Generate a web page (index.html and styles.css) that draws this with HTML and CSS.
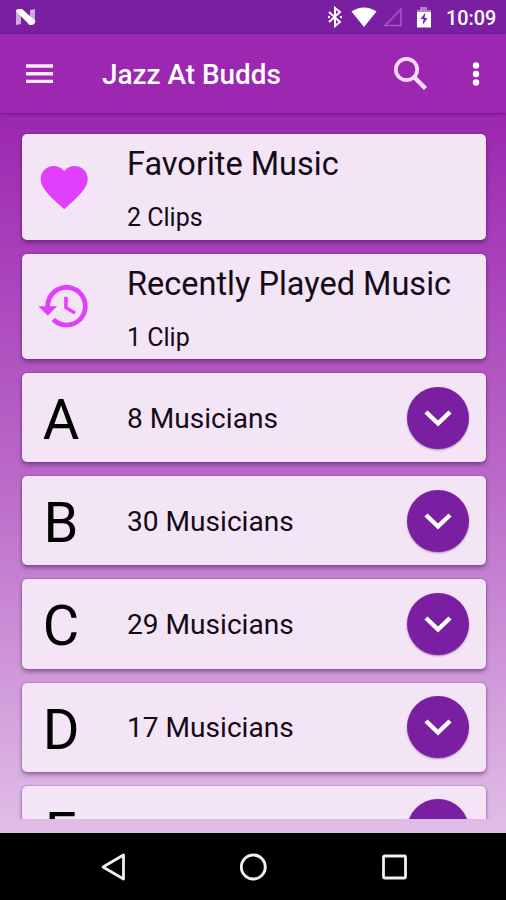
FILE: index.html
```html
<!DOCTYPE html>
<html lang="en">
<head>
<meta charset="utf-8">
<title>Jazz At Budds</title>
<link rel="stylesheet" href="styles.css">
</head>
<body>
<div class="screen">
  <div class="status">
    <svg class="n-logo" viewBox="0 0 22 18"><path d="M1 3l5-1v14l-5 1z" fill="#d3a8df"/><path d="M15 2l5-1v14l-5 1z" fill="#d3a8df"/><path d="M1 3q0-2 3-2h3l13.500 12q-1 4-4 4h-2z" fill="#fff"/></svg>
    <svg class="bluetooth" viewBox="0 0 16 22"><path d="M2 6l11 10-5 4V2l5 4L2 16" fill="none" stroke="#fff" stroke-width="2"/><circle cx="2" cy="11" r="1.200" fill="#fff"/><circle cx="14" cy="11" r="1.200" fill="#fff"/></svg>
    <svg class="wifi" viewBox="0 0 26 20"><path d="M.5 4.500Q13-3.500 25.500 4.500L13 20z" fill="#fff"/></svg>
    <svg class="signal" viewBox="0 0 20 20"><path d="M18 2v16.500H2z" fill="none" stroke="#a75bc0" stroke-width="1.500"/></svg>
    <svg class="battery" viewBox="0 0 16 21"><path d="M4 0h7v3h4v3H1V3h3z" fill="#b87fcb"/><path d="M1 5h14v15.500H1z" fill="#fff"/><path d="M9.500 5.500L4.500 12H7.500L6.500 18 11.500 11H8.500z" fill="#7b1fa2"/></svg>
    <span class="clock">10:09</span>
  </div>
  <header class="appbar">
    <svg class="menu" viewBox="0 0 27 20"><path d="M0 2h27M0 9.700h27M0 17.400h27" stroke="#fdeaff" stroke-width="3.400"/></svg>
    <h1 class="title">Jazz At Budds</h1>
    <svg class="search" viewBox="0 0 36 36"><circle cx="13.500" cy="13.500" r="10.700" fill="none" stroke="#fbdcff" stroke-width="3.700"/><path d="M21.500 21.500L32.500 32.500" stroke="#fbdcff" stroke-width="4.400"/></svg>
    <svg class="more" viewBox="0 0 8 24"><g fill="#fff"><circle cx="4" cy="3.500" r="3.200"/><circle cx="4" cy="12" r="3.200"/><circle cx="4" cy="20.500" r="3.200"/></g></svg>
  </header>
  <main class="content">
    <div class="list">
      <section class="card tall">
        <div class="lead"><svg class="icon" viewBox="0 0 24 24"><path d="M12 21.350l-1.450-1.320C5.400 15.360 2 12.280 2 8.500 2 5.420 4.420 3 7.500 3c1.740 0 3.410.81 4.500 2.090C13.090 3.810 14.760 3 16.500 3 19.580 3 22 5.420 22 8.500c0 3.780-3.400 6.860-8.550 11.540L12 21.350z"/></svg></div>
        <div class="text"><div class="name">Favorite Music</div><div class="clips">2 Clips</div></div>
      </section>
      <section class="card tall">
        <div class="lead"><svg class="icon" viewBox="0 0 24 24"><path d="M13 3c-4.970 0-9 4.030-9 9H1l3.890 3.890.07.14L9 12H6c0-3.870 3.130-7 7-7s7 3.130 7 7-3.130 7-7 7c-1.930 0-3.680-.79-4.940-2.060l-1.420 1.420C8.270 19.990 10.510 21 13 21c4.970 0 9-4.030 9-9s-4.030-9-9-9zm-1 5v5l4.280 2.540.72-1.210-3.500-2.080V8H12z"/></svg></div>
        <div class="text"><div class="name">Recently Played Music</div><div class="clips">1 Clip</div></div>
      </section>
      <section class="card"><div class="lead letter">A</div><div class="count">8 Musicians</div><div class="fab"><svg viewBox="0 0 28 18"><path d="M2 3l12 11.500L26 3"/></svg></div></section>
      <section class="card"><div class="lead letter">B</div><div class="count">30 Musicians</div><div class="fab"><svg viewBox="0 0 28 18"><path d="M2 3l12 11.500L26 3"/></svg></div></section>
      <section class="card"><div class="lead letter">C</div><div class="count">29 Musicians</div><div class="fab"><svg viewBox="0 0 28 18"><path d="M2 3l12 11.500L26 3"/></svg></div></section>
      <section class="card"><div class="lead letter">D</div><div class="count">17 Musicians</div><div class="fab"><svg viewBox="0 0 28 18"><path d="M2 3l12 11.500L26 3"/></svg></div></section>
      <section class="card"><div class="lead letter">E</div><div class="count"></div><div class="fab"></div></section>
    </div>
  </main>
  <nav class="navbar">
    <svg viewBox="0 0 28 28"><path d="M24.500 2v24L4 14z"/></svg>
    <svg viewBox="0 0 28 28"><circle cx="14.300" cy="14" r="12"/></svg>
    <svg viewBox="0 0 28 28"><rect x="3.500" y="3" width="22" height="22" rx="1"/></svg>
  </nav>
</div>
</body>
</html>
```

FILE: styles.css
```css
* { box-sizing: border-box; }
body { margin: 0; font-family: Roboto, "Liberation Sans", sans-serif; color: #140a18; }
svg { display: block; flex: none; }
.screen { width: 506px; height: 900px; display: flex; flex-direction: column; overflow: hidden; }

.status { height: 34px; flex: none; background: #7b1fa2; display: flex; align-items: center; padding-right: 10px; }
.n-logo { width: 22px; height: 18px; margin-left: 15px; }
.bluetooth { width: 16px; height: 22px; margin-left: auto; }
.wifi { width: 26px; height: 20px; margin-left: 8px; }
.signal { width: 20px; height: 20px; margin-left: 6px; }
.battery { width: 16px; height: 21px; margin-left: 13px; }
.clock { width: 50px; margin-left: 14px; padding-top: 3px; font-size: 19.800px; font-weight: 500; line-height: 34px; color: #fff; white-space: nowrap; }

.appbar { height: 79px; flex: none; background: #9c27b0; display: flex; align-items: center; padding: 0 26px; box-shadow: 0 1px 3px rgba(60, 0, 80, .5); position: relative; }
.menu { width: 27px; height: 20px; }
.title { margin: 3px 0 0 49px; font-size: 27.900px; font-weight: 500; line-height: 34px; color: #fff; white-space: nowrap; }
.search { width: 36px; height: 36px; margin-left: auto; }
.more { width: 8px; height: 24px; margin: 0 0 0 43px; }

.content { height: 720px; flex: none; padding-bottom: 14px; background: linear-gradient(#9c27b0, #ba68c8 50%, #e1bee7); }
.list { height: 706px; overflow: hidden; padding: 21px 20px 0 22px; display: flex; flex-direction: column; gap: 14px; }
.card { height: 89.200px; flex: none; border-radius: 5px; background: #f3e5f5; display: flex; align-items: center; padding-right: 17px; box-shadow: 0 3px 4px rgba(50, 0, 70, .38), 0 0 2px rgba(50, 0, 70, .4); }
.tall { height: 105.500px; }
.lead { width: 105px; flex: none; padding-left: 13.500px; }
.icon { width: 56.400px; height: 56.400px; fill: #e040fb; }
.letter { padding: 5px 27px 0 0; font-size: 56px; line-height: 66px; color: #000; text-align: center; }
.text { align-self: flex-start; padding-top: 11px; }
.name { font-size: 32.500px; line-height: 38px; white-space: nowrap; }
.clips { margin-top: 19px; font-size: 25px; line-height: 32px; }
.count { flex: 1; font-size: 28.100px; line-height: 34px; padding-top: 2px; }
.fab { width: 62px; height: 62px; flex: none; border-radius: 50%; background: #7b1fa2; display: flex; align-items: center; justify-content: center; box-shadow: 0 1px 2px rgba(50, 0, 70, .4); }
.fab svg { width: 28px; height: 18px; fill: none; stroke: #fff; stroke-width: 4.500; }

.navbar { flex: 1; background: #000; display: flex; align-items: center; justify-content: center; gap: 112.500px; }
.navbar svg { width: 28px; height: 28px; fill: none; stroke: #f0f0f0; stroke-width: 2.800; stroke-linejoin: round; }
```
